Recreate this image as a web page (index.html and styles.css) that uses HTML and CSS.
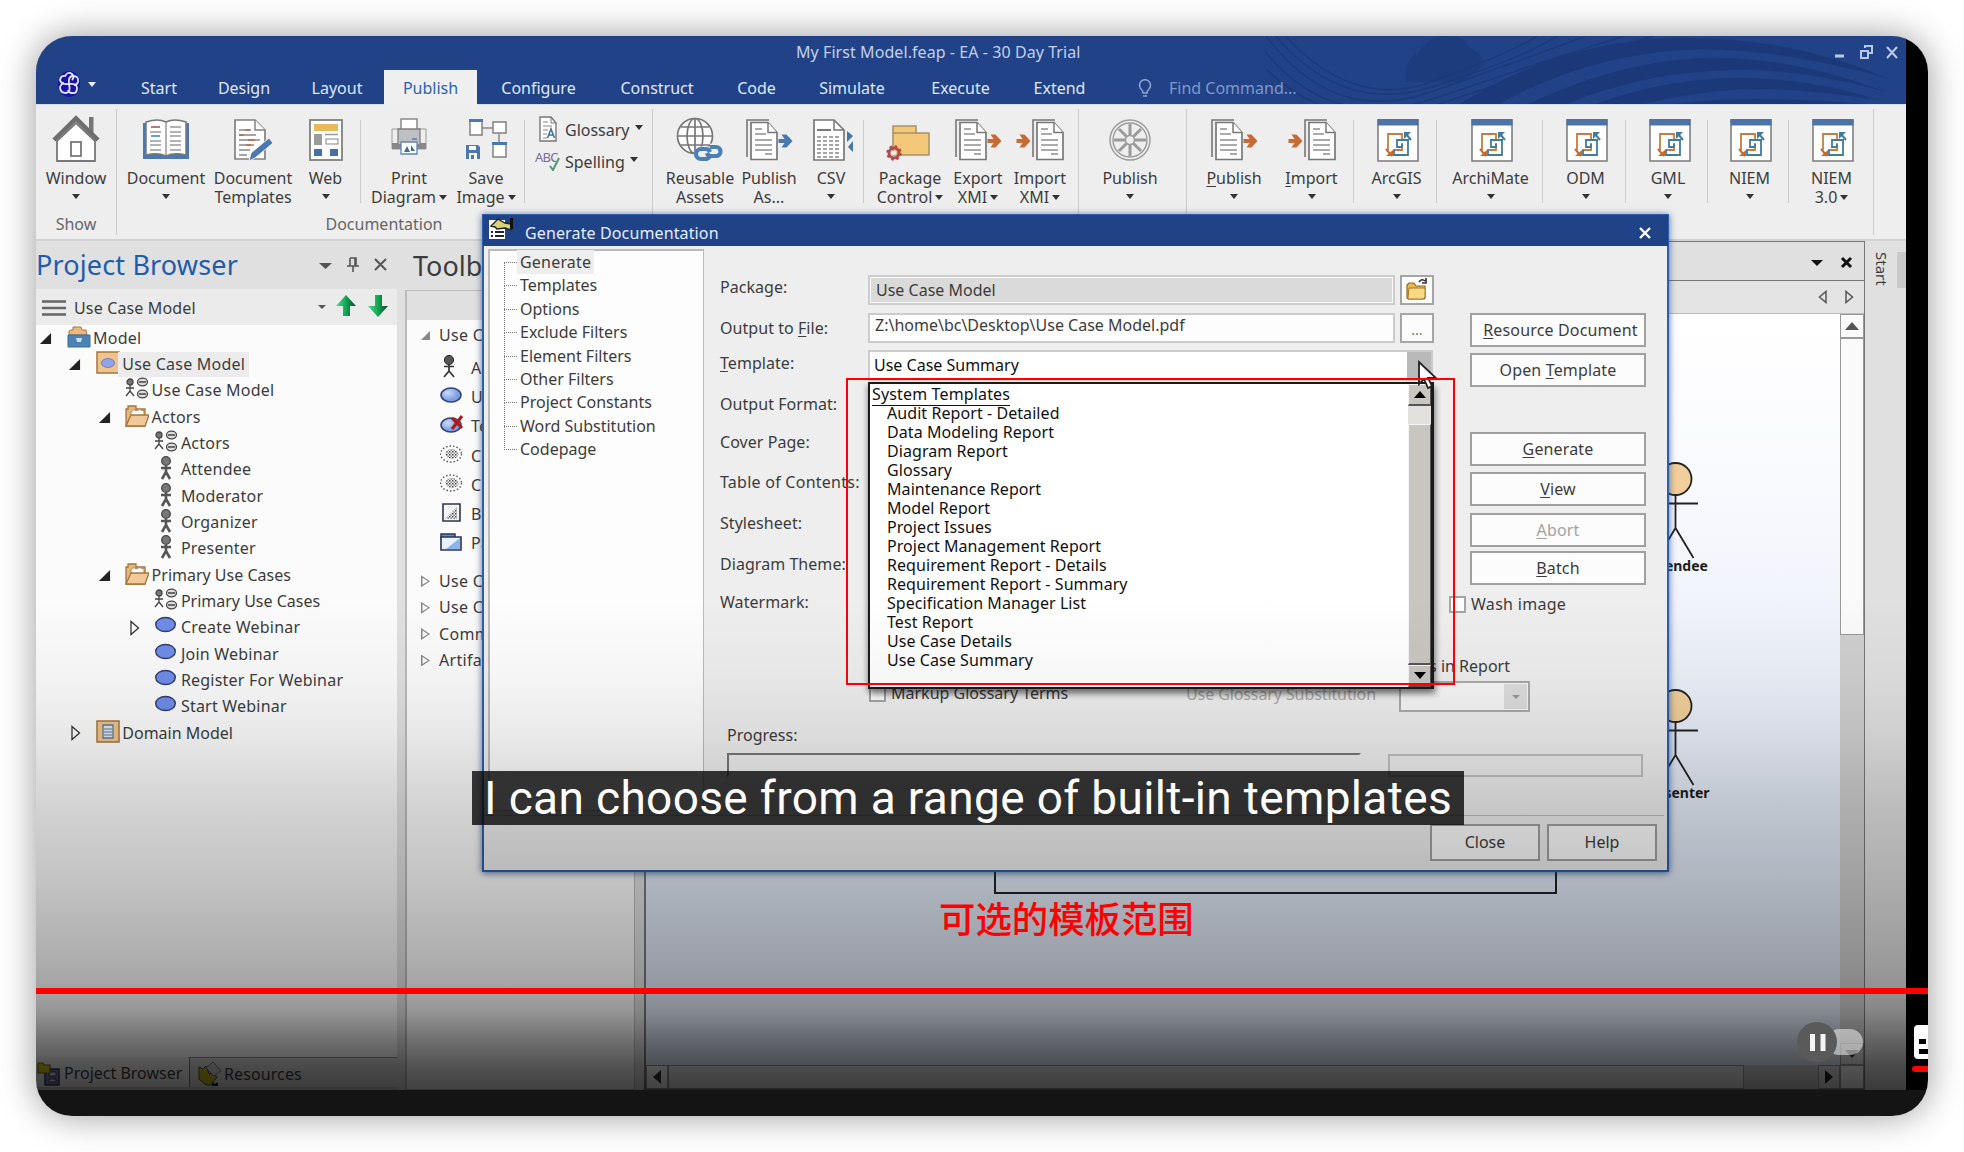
FILE: index.html
```html
<!DOCTYPE html>
<html lang="en">
<head>
<meta charset="utf-8">
<title>My First Model.feap - EA - 30 Day Trial</title>
<link rel="stylesheet" href="styles.css">
</head>
<body>
<svg class="defs" aria-hidden="true">
  <defs>
    <linearGradient id="gGreen" x1="0" x2="1"><stop offset="0" stop-color="#4be08a"/><stop offset=".5" stop-color="#12a554"/><stop offset="1" stop-color="#0b4a2c"/></linearGradient>
    <radialGradient id="gBall" cx=".35" cy=".35"><stop offset="0" stop-color="#c8dcfa"/><stop offset="1" stop-color="#7f9fe0"/></radialGradient>
    <pattern id="dots" width="3" height="3" patternUnits="userSpaceOnUse"><rect width="1.500" height="1.500" fill="#444"/><rect x="1.500" y="1.500" width="1.500" height="1.500" fill="#888"/></pattern>

    <symbol id="page" viewBox="0 0 32 42">
      <path d="M1 38V1h22" fill="none" stroke="#777" stroke-width="1.6"/>
      <path d="M5 3.500h17l9 10v27H5z" fill="#fff" stroke="#777" stroke-width="1.700"/>
      <path d="M22 3.500v10h9" fill="#fff" stroke="#777" stroke-width="1.500"/>
      <path d="M9 10h7M9 15h11M9 21h17M9 26h17M9 31h17M19 35h7" stroke="#8f8f8f" stroke-width="1.500"/>
    </symbol>
    <symbol id="arrow" viewBox="0 0 14 14"><path d="M0 5h6L3 .500h5L14 7l-6 6.500H3L6 9H0z"/></symbol>

    <symbol id="i-window" viewBox="0 0 48 48">
      <path d="M37 2h4.500v20L37 17z" fill="#777"/>
      <path d="M5 26 24 8l19 18v20H5z" fill="#fff" stroke="#777" stroke-width="1.800"/>
      <path d="M2 25 24 3.500 46 25" fill="none" stroke="#6e6e6e" stroke-width="4.500"/>
      <rect x="19" y="27" width="10" height="14" fill="#fff" stroke="#777" stroke-width="1.800"/>
    </symbol>
    <symbol id="i-book" viewBox="0 0 48 48">
      <path d="M1 8h46v36H1z" fill="#4a78b0"/>
      <path d="M4 7q12-4 20 0 8-4 20 0v33q-12-3-20 1-8-4-20-1z" fill="#fff" stroke="#777" stroke-width="1.500"/>
      <path d="M24 7v33" stroke="#999" stroke-width="1.500"/>
      <path d="M8 17h11M8 26h11M8 30h11M8 35h11M28 12h11M28 17h11M28 21h11M28 26h11M28 30h11M28 35h11" stroke="#999" stroke-width="1.300"/>
      <path d="M9 12h9" stroke="#a5503c" stroke-width="1.600"/><path d="M9 21h9" stroke="#3a82b0" stroke-width="1.600"/>
    </symbol>
    <symbol id="i-tmpl" viewBox="0 0 48 48">
      <path d="M6 5h20l10 10v29H6z" fill="#fff" stroke="#808080" stroke-width="1.700"/>
      <path d="M26 5v10h10" fill="#fff" stroke="#808080" stroke-width="1.500"/>
      <path d="M10 15h12M10 20h17M10 25h21M10 30h15M10 35h11M10 40h8" stroke="#888" stroke-width="1.400"/>
      <path d="M16 15h5M10 20h5M19 25h7M17 30h5" stroke="#b86a4c" stroke-width="1.500"/>
      <path d="m20 46 2-8 18-15 4 5-18 15z" fill="#4a78b0" stroke="#eee" stroke-width="1"/>
    </symbol>
    <symbol id="i-web" viewBox="0 0 48 48">
      <rect x="8" y="5" width="32" height="40" fill="#fff" stroke="#808080" stroke-width="1.800"/>
      <path d="M12 9h24v7H12z" fill="#e9b85d"/><path d="M12 19h8v11h-8z" fill="#9b9b9b"/>
      <path d="M23 19.500h13" stroke="#999" stroke-width="1.500"/><rect x="24" y="24" width="12" height="5" fill="#fff" stroke="#888"/>
      <path d="M12 34h8v7h-8zM28 34h8v7h-8z" fill="#4470a5"/>
    </symbol>
    <symbol id="i-print" viewBox="0 0 48 48">
      <path d="M7 14h34v20H7z" fill="#eee" stroke="#999" stroke-width="1"/>
      <path d="M7 28h34v6H7z" fill="#888"/>
      <path d="M16 4h16v12H16z" fill="#fff" stroke="#888" stroke-width="1.500"/>
      <path d="M13 14h22v16H13z" fill="#bfbfc2" stroke="#808080" stroke-width="1.300"/>
      <path d="M16 27h16v12H16z" fill="#fff" stroke="#5c87ac" stroke-width="1.300"/>
      <path d="m19 37 3-6 3 6zM26 30l4 6h-4z" fill="#3b7190"/><path d="M27 24h5" stroke="#5a7fb5" stroke-width="1.500"/>
    </symbol>
    <symbol id="i-save" viewBox="0 0 48 48">
      <path d="M20 13h11M37 19v9" stroke="#888" stroke-width="1.500"/>
      <path d="M8 5h12v15H8zM31 7h13v11H31zM31 28h13v14H31z" fill="#fff" stroke="#808080" stroke-width="1.500"/>
      <path d="M7 4h14v3H7zM30 27h15v3H30z" fill="#4a78b0"/>
      <path d="M4 30h12l2 2v12H4z" fill="#4a78b0"/><path d="M7 31h7v4H7zM7 38h8v6H7z" fill="#fff"/><path d="M9 40h3v4H9z" fill="#4a78b0"/>
    </symbol>
    <symbol id="i-globe" viewBox="0 0 48 48">
      <g fill="none" stroke="#777" stroke-width="1.700"><circle cx="19" cy="21" r="17.500" fill="#fff"/><ellipse cx="19" cy="21" rx="8" ry="17.500"/><path d="M19 3v35M2 21h35M5 12h28M5 30h28"/></g>
      <path d="M34 35h-9a5 5 0 0 0 0 9h6M30 41h10a5 5 0 0 0 0-9h-6" fill="none" stroke="#eee" stroke-width="7"/>
      <path d="M34 41q-2 3-5 3h-4a5 5 0 0 1 0-10h5q3 0 4 3M31 38q1 3 4 3h5a4 4 0 0 0 0-9h-6" fill="none" stroke="#4a80b5" stroke-width="4.200"/>
    </symbol>
    <symbol id="i-out" viewBox="0 0 48 48"><use href="#page" x="1" y="4" width="32" height="42"/><use href="#arrow" x="33" y="19" width="15" height="14"/></symbol>
    <symbol id="i-in" viewBox="0 0 48 48"><use href="#page" x="16" y="4" width="32" height="42"/><use href="#arrow" x="0" y="19" width="15" height="14"/></symbol>
    <symbol id="i-csv" viewBox="0 0 48 48">
      <path d="M7 5h20l10 10v30H7z" fill="#fff" stroke="#777" stroke-width="1.700"/><path d="M27 5v10h10" fill="none" stroke="#777" stroke-width="1.500"/>
      <path d="M10 15h14" stroke="#777" stroke-width="2"/><path d="M10 22h24M10 26h24M10 30h24M10 34h24M10 38h24M10 42h24" stroke="#888" stroke-width="1.300" stroke-dasharray="4 2"/>
      <path d="m40 16 6 5-6 6zM46 26v11l-5-5z" fill="#4477a6"/>
    </symbol>
    <symbol id="i-pack" viewBox="0 0 48 48">
      <path d="M7 19V11h23v7h13v22H7z" fill="#f3c878" stroke="#a5936c" stroke-width="1.600"/><path d="M7 18h24" stroke="#a5936c" stroke-width="1.300"/>
      <circle cx="8" cy="38" r="5" fill="none" stroke="#b24a4a" stroke-width="3"/><circle cx="8" cy="38" r="6.500" fill="none" stroke="#b24a4a" stroke-width="2.500" stroke-dasharray="2.500 2.600"/><circle cx="8" cy="38" r="2.200" fill="#eee"/>
    </symbol>
    <symbol id="i-wheel" viewBox="0 0 48 48">
      <g fill="none" stroke="#9a9a9a" stroke-width="1.400"><circle cx="24" cy="25" r="20"/><circle cx="24" cy="25" r="17"/><circle cx="24" cy="25" r="4.500"/></g>
      <g stroke="#9a9a9a" stroke-width="3"><path d="M24 9v11M24 30v11M8 25h11M29 25h11M13 14l8 8M27 28l8 8M35 14l-8 8M21 28l-8 8"/></g>
    </symbol>
    <symbol id="i-schema" viewBox="0 0 48 48">
      <rect x="4" y="5" width="40" height="41" fill="#fff" stroke="#808080" stroke-width="1.600"/><path d="M3.500 4h41v6.500h-41z" fill="#4d74a5"/>
      <path d="M14 35V19h14v5M28 28v7h-9" fill="none" stroke="#c97c38" stroke-width="1.800"/>
      <path d="M34 24v16H20v-5M35 25H23v7h5v-3" fill="none" stroke="#417b9e" stroke-width="1.800"/>
      <path d="M30 17h7v7z" fill="#417b9e" transform="matrix(-1 0 0 1 67 0)"/><path d="m37 25-5-6" stroke="#417b9e" stroke-width="2"/><path d="m12 34 6 7" stroke="#c46a2c" stroke-width="2"/><path d="M19 35v6h-7z" fill="#c46a2c"/>
    </symbol>
    <symbol id="i-gloss" viewBox="0 0 20 26"><path d="M2 1h11l5 6v18H2z" fill="#fff" stroke="#777" stroke-width="1.400"/><path d="M13 1v6h5" fill="none" stroke="#777"/><path d="M5 6h5M5 10h9M5 14h5M5 18h4M5 22h4" stroke="#888" stroke-width="1.200"/><path d="m9.500 22 3.500-9 3.500 9M11 19h4" stroke="#43739c" stroke-width="1.600" fill="none"/></symbol>

    <symbol id="t-open" viewBox="0 0 14 14"><path d="M13 1v12H1z" fill="#222"/></symbol>
    <symbol id="t-shut" viewBox="0 0 14 16"><path d="M4 1.500v13L11.500 8z" fill="#fff" stroke="#333" stroke-width="1.300"/></symbol>
    <symbol id="n-model" viewBox="0 0 24 24"><path d="M2 10V6q1-1 3-1h1V2h8l1 3h4l1 5z" fill="#eab981" stroke="#a5763b"/><path d="M1 10h22v12H1z" fill="#4c83b5" stroke="#3d6c98"/><path d="M9 13h6l-1 4h-4z" fill="#cfe2f3"/></symbol>
    <symbol id="n-ucm" viewBox="0 0 24 24"><path d="M1 1h22v21H1z" fill="#eec38c" stroke="#a5763b" stroke-width="1.500"/><ellipse cx="12" cy="12" rx="6.500" ry="4.500" fill="#92a1ea" stroke="#7a7fae"/></symbol>
    <symbol id="n-dom" viewBox="0 0 24 24"><path d="M1 1h22v21H1z" fill="#eec38c" stroke="#a5763b" stroke-width="1.500"/><path d="M7 5h10v13H7z" fill="#d9e6f5" stroke="#65758a" stroke-width="1.300"/><path d="M8 9h8M8 12h8M8 15h8" stroke="#65758a"/></symbol>
    <symbol id="n-diag" viewBox="0 0 24 24"><g fill="none" stroke="#444" stroke-width="1.300"><circle cx="5" cy="5" r="3" fill="#777"/><path d="M5 8v6M1 11h8M5 14l-4 5M5 14l4 5"/><ellipse cx="17.500" cy="5" rx="5" ry="3.800" fill="#ddd"/><ellipse cx="17.500" cy="17" rx="5" ry="3.800" fill="#ddd"/><path d="M14 5h7M14 17h7"/></g></symbol>
    <symbol id="n-folder" viewBox="0 0 24 24"><path d="M1 22V5h2V2h8v3h9v17z" fill="#e6b77d" stroke="#a5763b" stroke-width="1.300"/><path d="M6 8q3-4 5-1 3-3 8 0v8H6z" fill="#fff" stroke="#a5876b"/><path d="m1 22 5-11h18l-4 11z" fill="#f1c999" stroke="#a5763b" stroke-width="1.300"/></symbol>
    <symbol id="n-actor" viewBox="0 0 24 24"><circle cx="12" cy="5" r="4.300" fill="#777" stroke="#444" stroke-width="1.300"/><path d="M12 10v7M7 12h10M12 16l-4 7M12 16l4 7" fill="none" stroke="#555" stroke-width="2.600"/></symbol>
    <symbol id="n-case" viewBox="0 0 24 24"><ellipse cx="11.500" cy="10.500" rx="9.800" ry="7" fill="#6f8ce8" stroke="#333c68" stroke-width="1.400"/></symbol>

    <symbol id="b-actor" viewBox="0 0 24 24"><circle cx="9" cy="6" r="4.600" fill="#555" stroke="#222"/><path d="M9 10v7M4 12.500h10M9 17l-5 6M9 17l5 6" fill="none" stroke="#333" stroke-width="1.700"/></symbol>
    <symbol id="b-case" viewBox="0 0 24 24"><ellipse cx="11" cy="12" rx="10" ry="7" fill="url(#gBall)" stroke="#33427a" stroke-width="1.600"/></symbol>
    <symbol id="b-test" viewBox="0 0 24 24"><ellipse cx="11" cy="12" rx="10" ry="7" fill="url(#gBall)" stroke="#33427a" stroke-width="1.600"/><path d="m12 5 10 10M22 3 12 16" stroke="#b01818" stroke-width="3"/></symbol>
    <symbol id="b-coll" viewBox="0 0 24 24"><ellipse cx="11" cy="12" rx="10.500" ry="8" fill="none" stroke="#555" stroke-width="1.400" stroke-dasharray="1.500 2"/><ellipse cx="12" cy="12" rx="6.500" ry="5" fill="url(#dots)"/></symbol>
    <symbol id="b-bound" viewBox="0 0 24 24"><path d="M3 3h17v17H3z" fill="#f5f5f5" stroke="#2d3550" stroke-width="1.600"/><path d="M17 6v12H5z" fill="url(#dots)"/></symbol>
    <symbol id="b-pack" viewBox="0 0 24 24"><path d="M1 4h14v4H1z" fill="#7289bd" stroke="#26345c" stroke-width="1.500"/><path d="M1 7h20v13H1z" fill="#e9f1fc" stroke="#26345c" stroke-width="1.600"/><path d="M20 8v11H6z" fill="#8db4e8"/></symbol>
  </defs>
</svg>

<main class="frame">
  <div class="app">
    <header class="titlebar">
      <svg class="waves" viewBox="0 0 660 68" preserveAspectRatio="none">
        <path d="M144 46q0-26 12-28Q170-2 186 0q20 0 24 12 12 4 16 16l-24 18z" fill="#1b3a7b" opacity=".7"/>
        <g fill="none" stroke="#1b3a7a" stroke-width="1.500"><path d="M0 0Q70 90 170 56T330 0M10 0Q80 80 175 50T300 0M20 0Q90 74 170 46T280 0M-10 4Q60 100 175 62T370 0M-20 10Q55 108 185 66T400 0"/></g>
        <g fill="#1b3979"><path d="M200 68Q300 6 420 2q120-2 220 40Q520 10 430 14 330 20 240 68z"/><path d="M270 68Q380 18 480 22q80 4 160 34-90-24-160-22-90 2-170 34z"/><path d="M340 68q80-28 160-26 70 2 130 22-90-14-150-10-50 4-90 14z"/><path d="M420 68q80-10 200 0z"/></g>
      </svg>
      <div class="title-row"><span>My First Model.feap - EA - 30 Day Trial</span>
        <svg class="winbtns" width="70" height="20" viewBox="0 0 70 20"><g fill="none" stroke="#b9c8e8" stroke-width="2"><path d="M2 13h9" stroke-width="3"/><path d="M32 5V3h7v7h-3M28 8h7v7h-7z"/><path d="m54 4 10 11M64 4 54 15"/></g></svg>
      </div>
      <nav class="tabs">
        <span class="logo"><svg width="24" height="28" viewBox="0 0 24 28"><ellipse cx="12" cy="14" rx="11" ry="13" fill="#1712a8"/><g fill="none" stroke="#e7e6ff" stroke-width="1.800"><path d="M12 14Q4 15 3 10q1-5 5-4 3-5 7-2 3 3 0 6M12 14q-1-8 4-8 6 0 5 6-1 3-4 3M12 14q8-1 8 4 0 6-5 5-3 0-4-3M12 14q2 8-3 9-6 0-6-6 1-3 4-4"/></g></svg><i class="caret light"></i></span>
        <span>Start</span><span>Design</span><span>Layout</span><span class="active">Publish</span><span>Configure</span><span>Construct</span><span>Code</span><span>Simulate</span><span>Execute</span><span>Extend</span>
        <span class="find"><svg width="14" height="20" viewBox="0 0 14 20"><path d="M5 14Q5 12 3 10a5.500 5.500 0 1 1 8 0Q9 12 9 14zM5 17h4" fill="none" stroke="#8ea6d6" stroke-width="1.500"/></svg>Find Command...</span>
      </nav>
    </header>

    <section class="ribbon">
      <div class="item"><svg><use href="#i-window"/></svg>Window<i class="caret"></i></div>
      <i class="sep full start"></i>
      <div class="item"><svg><use href="#i-book"/></svg>Document<i class="caret"></i></div>
      <div class="item"><svg><use href="#i-tmpl"/></svg><span>Document</span><span>Templates</span></div>
      <div class="item"><svg><use href="#i-web"/></svg>Web<i class="caret"></i></div>
      <i class="sep"></i>
      <div class="item"><svg><use href="#i-print"/></svg><span>Print</span><span>Diagram<i class="caret in"></i></span></div>
      <div class="item"><svg><use href="#i-save"/></svg><span>Save</span><span>Image<i class="caret in"></i></span></div>
      <i class="sep start"></i>
      <div class="small">
        <div><svg width="20" height="26"><use href="#i-gloss"/></svg><span>Glossary</span><i class="caret"></i></div>
        <div><span class="abc">ABC<svg width="12" height="14" viewBox="0 0 12 14"><path d="m1 9 3 4 6-12" fill="none" stroke="#4d9a72" stroke-width="2"/></svg></span><span>Spelling</span><i class="caret"></i></div>
      </div>
      <i class="sep full start"></i>
      <div class="item"><svg><use href="#i-globe"/></svg><span>Reusable</span><span>Assets</span></div>
      <div class="item blue"><svg><use href="#i-out"/></svg><span>Publish</span><span>As...</span></div>
      <div class="item"><svg><use href="#i-csv"/></svg>CSV<i class="caret"></i></div>
      <i class="sep start"></i>
      <div class="item"><svg><use href="#i-pack"/></svg><span>Package</span><span>Control<i class="caret in"></i></span></div>
      <div class="item orange"><svg><use href="#i-out"/></svg><span>Export</span><span>XMI<i class="caret in"></i></span></div>
      <div class="item orange"><svg><use href="#i-in"/></svg><span>Import</span><span>XMI<i class="caret in"></i></span></div>
      <i class="sep full"></i>
      <div class="item"><svg><use href="#i-wheel"/></svg>Publish<i class="caret"></i></div>
      <i class="sep full"></i>
      <div class="item orange"><svg><use href="#i-out"/></svg><span><u>P</u>ublish</span><i class="caret"></i></div>
      <div class="item orange"><svg><use href="#i-in"/></svg><span><u>I</u>mport</span><i class="caret"></i></div>
      <i class="sep"></i>
      <div class="item sch"><svg><use href="#i-schema"/></svg>ArcGIS<i class="caret"></i></div>
      <i class="sep"></i>
      <div class="item sch"><svg><use href="#i-schema"/></svg>ArchiMate<i class="caret"></i></div>
      <i class="sep"></i>
      <div class="item sch"><svg><use href="#i-schema"/></svg>ODM<i class="caret"></i></div>
      <i class="sep"></i>
      <div class="item sch"><svg><use href="#i-schema"/></svg>GML<i class="caret"></i></div>
      <i class="sep"></i>
      <div class="item sch"><svg><use href="#i-schema"/></svg>NIEM<i class="caret"></i></div>
      <i class="sep"></i>
      <div class="item sch"><svg><use href="#i-schema"/></svg><span>NIEM</span><span>3.0<i class="caret in"></i></span></div>
      <i class="sep full"></i>
      <div class="group g1">Show</div>
      <div class="group g2">Documentation</div>
    </section>

    <div class="work">
      <aside class="browser">
        <div class="panel-head"><h2>Project Browser</h2>
          <svg width="74" height="20" viewBox="0 0 74 20"><path d="M1 8h13l-6.500 6z" fill="#555"/><g fill="none" stroke="#555" stroke-width="1.600"><path d="M32 3h6v8M32 3v8M29 11h12M35 11v6M37 3v8"/><path d="m57 4 11 11M68 4 57 15" stroke-width="2"/></g></svg>
        </div>
        <div class="crumb"><svg width="24" height="16" viewBox="0 0 24 16"><path d="M0 1.500h24M0 8h24M0 14.500h24" stroke="#666" stroke-width="2.600"/></svg><span>Use Case Model</span>
          <svg class="updown" width="70" height="24" viewBox="0 0 70 24"><path d="M0 11h8l-4 4z" fill="#555"/><path d="M28 1 38 12h-6v10h-7V12h-7z" fill="url(#gGreen)"/><path d="M60 23 70 12h-6V1h-7v11h-7z" fill="url(#gGreen)"/></svg>
        </div>
        <ul class="tree">
          <li class="l0"><svg class="tw"><use href="#t-open"/></svg><svg class="ic"><use href="#n-model"/></svg><b>Model</b></li>
          <li class="l1"><svg class="tw"><use href="#t-open"/></svg><svg class="ic"><use href="#n-ucm"/></svg><b class="sel">Use Case Model</b></li>
          <li class="l2"><svg class="tw"></svg><svg class="ic"><use href="#n-diag"/></svg><b>Use Case Model</b></li>
          <li class="l2"><svg class="tw"><use href="#t-open"/></svg><svg class="ic"><use href="#n-folder"/></svg><b>Actors</b></li>
          <li class="l3"><svg class="tw"></svg><svg class="ic"><use href="#n-diag"/></svg><b>Actors</b></li>
          <li class="l3"><svg class="tw"></svg><svg class="ic"><use href="#n-actor"/></svg><b>Attendee</b></li>
          <li class="l3"><svg class="tw"></svg><svg class="ic"><use href="#n-actor"/></svg><b>Moderator</b></li>
          <li class="l3"><svg class="tw"></svg><svg class="ic"><use href="#n-actor"/></svg><b>Organizer</b></li>
          <li class="l3"><svg class="tw"></svg><svg class="ic"><use href="#n-actor"/></svg><b>Presenter</b></li>
          <li class="l2 tight"><svg class="tw"><use href="#t-open"/></svg><svg class="ic"><use href="#n-folder"/></svg><b>Primary Use Cases</b></li>
          <li class="l3 tight"><svg class="tw"></svg><svg class="ic"><use href="#n-diag"/></svg><b>Primary Use Cases</b></li>
          <li class="l3"><svg class="tw shut"><use href="#t-shut"/></svg><svg class="ic"><use href="#n-case"/></svg><b>Create Webinar</b></li>
          <li class="l3"><svg class="tw"></svg><svg class="ic"><use href="#n-case"/></svg><b>Join Webinar</b></li>
          <li class="l3"><svg class="tw"></svg><svg class="ic"><use href="#n-case"/></svg><b>Register For Webinar</b></li>
          <li class="l3"><svg class="tw"></svg><svg class="ic"><use href="#n-case"/></svg><b>Start Webinar</b></li>
          <li class="l1 tight"><svg class="tw shut"><use href="#t-shut"/></svg><svg class="ic"><use href="#n-dom"/></svg><b>Domain Model</b></li>
        </ul>
        <div class="dock-tabs">
          <span class="on"><svg width="24" height="26" viewBox="0 0 24 26"><path d="M8 9h14v16H8z" fill="#7d7fae" stroke="#33355e" stroke-width="1.500"/><path d="M12 12h7v4h-7zM12 19h7v3h-7z" fill="#dde" stroke="#33355e"/><path d="M1 3h5l1 2h6v8H1z" fill="#d8c62a" stroke="#6d6410" stroke-width="1.200"/></svg>Project Browser</span>
          <span><svg width="24" height="26" viewBox="0 0 24 26"><path d="m2 6 4 2 3-3 3 8 3-1 5 4-6 8-5 0-7-6z" fill="#c8b823" stroke="#55500f"/><path d="m9 7 7-6 8 9-7 5z" fill="#d6d6dc" stroke="#777"/><path d="M15 25v-4l3 2 3-2v4z" fill="#111"/></svg>Resources</span>
        </div>
      </aside>

      <aside class="toolbox">
        <h2>Toolbox</h2>
        <div class="toolpane">
          <div class="band"></div>
          <p class="cat first"><i class="tri o"></i>Use Case</p>
          <p><svg><use href="#b-actor"/></svg>Actor</p>
          <p><svg><use href="#b-case"/></svg>Use Case</p>
          <p><svg><use href="#b-test"/></svg>Test Case</p>
          <p><svg><use href="#b-coll"/></svg>Collaboration</p>
          <p><svg><use href="#b-coll"/></svg>Collaboration Use</p>
          <p><svg><use href="#b-bound"/></svg>Boundary</p>
          <p><svg><use href="#b-pack"/></svg>Package</p>
          <div class="more">
            <p class="cat"><i class="tri"></i>Use Case Relations</p>
            <p class="cat"><i class="tri"></i>Use Case Patterns</p>
            <p class="cat"><i class="tri"></i>Common</p>
            <p class="cat"><i class="tri"></i>Artifacts</p>
          </div>
        </div>
      </aside>

      <section class="diagram">
        <div class="dtabs"><svg width="46" height="16" viewBox="0 0 46 16"><path d="M1 5h12l-6 6z" fill="#111"/><path d="m32 3 9 9M41 3l-9 9" stroke="#111" stroke-width="3"/></svg></div>
        <div class="dnav"><svg width="36" height="14" viewBox="0 0 36 14"><path d="M8 1.500v11L1.500 7zM28 1.500v11L34.500 7z" fill="none" stroke="#555" stroke-width="1.500"/></svg></div>
        <div class="dmain">
          <div class="canvas">
            <svg width="1195" height="750" viewBox="646 314 1195 750">
              <path d="M995 300V893H1556V300" fill="none" stroke="#222" stroke-width="2"/>
              <g id="fig" fill="none" stroke="#222" stroke-width="1.800"><circle cx="1675.500" cy="479" r="16" fill="#f2cf9a"/><path d="M1675.500 495v33M1653 503.500h45M1675.500 528l-18 30M1675.500 528l18 30"/></g>
              <use href="#fig" y="227"/>
              <text x="1675.500" y="571">Attendee</text><text x="1675.500" y="798">Presenter</text>
            </svg>
          </div>
          <div class="vscroll"><span class="btn"><svg width="14" height="8" viewBox="0 0 14 8"><path d="M0 8h14L7 0z" fill="#555"/></svg></span><span class="thumb"></span><span class="btn end"><svg width="14" height="8" viewBox="0 0 14 8"><path d="M0 0h14L7 8z" fill="#333"/></svg></span></div>
        </div>
        <div class="hscroll"><span class="btn"><svg width="8" height="14" viewBox="0 0 8 14"><path d="M8 0v14L0 7z" fill="#333"/></svg></span><span class="thumb"></span><span class="btn end"><svg width="8" height="14" viewBox="0 0 8 14"><path d="M0 0v14l8-7z" fill="#222"/></svg></span><span class="corner"></span></div>
      </section>
      <aside class="side"><span>Start</span><i></i></aside>
    </div>
  </div>

  <section class="dialog">
    <header><svg width="26" height="24" viewBox="0 0 26 24"><path d="M1 3h16v19H1z" fill="#fff"/><path d="M3 15h2M3 19h2M7 15h9M7 19h9" stroke="#223" stroke-width="2"/><path d="m3 9 7-7 7 4 6 1v6l-6-2-8 1-2-2z" fill="#d9d27a" stroke="#222" stroke-width="1.400"/><path d="M22 1h3v11h-3z" fill="#111"/></svg><span>Generate Documentation</span><svg class="x" width="14" height="14" viewBox="0 0 14 14"><path d="m2 2 10 10M12 2 2 12" stroke="#fff" stroke-width="2.400"/></svg></header>
    <div class="body">
      <ul class="dtree"><li><b>Generate</b></li><li>Templates</li><li>Options</li><li>Exclude Filters</li><li>Element Filters</li><li>Other Filters</li><li>Project Constants</li><li>Word Substitution</li><li>Codepage</li></ul>
      <div class="main">
        <div class="top">
          <div class="form">
            <label>Package:</label><div class="field f1"><span class="ro">Use Case Model</span><span class="sq"><svg width="26" height="26" viewBox="0 0 26 26"><path d="M3 21V8l2-2h5l2 3h9v12q0 1-1 1H4z" fill="#e9b94d" stroke="#8d6a20" stroke-width="1.200"/><path d="M4 21 5 11h16v9q-1 2-3 2H4z" fill="#f8d982" stroke="#a17b2c"/><path d="M15 5q3-4 6-1M22 1v5h-4" fill="none" stroke="#333" stroke-width="1.600"/></svg></span></div>
            <label>Output to&nbsp;<u>F</u>ile:</label><div class="field"><span class="path">Z:\home\bc\Desktop\Use Case Model.pdf</span><span class="sq">...</span></div>
            <label><u>T</u>emplate:</label><div class="field f3"><span class="combo">Use Case Summary<i></i></span></div>
            <label>Output Format:</label><label>Cover Page:</label><label class="wide">Table of Contents:</label><label>Stylesheet:</label><label>Diagram Theme:</label><label>Watermark:</label>
          </div>
          <div class="actions">
            <button><span><u>R</u>esource Document</span></button><button><span>Open <u>T</u>emplate</span></button><button class="gap"><span><u>G</u>enerate</span></button><button><span><u>V</u>iew</span></button><button class="off"><span><u>A</u>bort</span></button><button class="last"><span><u>B</u>atch</span></button>
            <span class="check wash"><i></i>Wash image</span>
          </div>
        </div>
        <div class="rep">Diagrams in Report</div>
        <div class="gloss"><span class="check"><i></i>Markup Glossary Terms</span><span class="dim">Use Glossary Substitution</span><span class="combo2"><i></i></span></div>
        <div class="plabel">Progress:</div>
        <div class="bars"><span></span><span></span></div>
      </div>
    </div>
    <footer><button>Close</button><button>Help</button></footer>

    <div class="droplist">
      <ul><li class="h"><span>System Templates</span></li><li>Audit Report - Detailed</li><li>Data Modeling Report</li><li>Diagram Report</li><li>Glossary</li><li>Maintenance Report</li><li>Model Report</li><li>Project Issues</li><li>Project Management Report</li><li>Requirement Report - Details</li><li>Requirement Report - Summary</li><li>Specification Manager List</li><li>Test Report</li><li>Use Case Details</li><li>Use Case Summary</li></ul>
      <div class="bar"><span><svg width="12" height="7" viewBox="0 0 12 7"><path d="M0 7h12L6 0z"/></svg></span><span class="t"></span><span><svg width="12" height="7" viewBox="0 0 12 7"><path d="M0 0h12L6 7z"/></svg></span></div>
    </div>
    <svg class="cursor" width="22" height="32" viewBox="0 0 22 32"><path d="M2 2v22l5-5 4 9 4-2-4-8h8z" fill="#fff" stroke="#222" stroke-width="1.800"/></svg>
  </section>

  <div class="shade"></div>
  <div class="callout"></div>
  <div class="toggle"><svg width="70" height="44" viewBox="0 0 70 44"><rect x="30" y="10" width="37" height="26" rx="13" fill="#fff" fill-opacity=".5"/><circle cx="21" cy="23" r="20" fill="#5a5a5a"/><path d="M14 15h5v17h-5zM24.500 15h5v17h-5z" fill="#f5f5f5"/></svg></div>
  <div class="cc"><svg width="24" height="50" viewBox="0 0 24 50"><rect x="3" y="1" width="40" height="34" rx="4" fill="#fff"/><path d="M8 15h7v5H8zM8 25h16v5H8zM18 15h8v5h-8z" fill="#000"/><rect x="1" y="42" width="40" height="6" rx="3" fill="#f00"/></svg></div>
  <p class="caption">I can choose from a range of built-in templates</p>
  <p class="note" lang="zh-CN">可选的模板范围</p>
  <div class="progress"></div>
</main>
</body>
</html>
```

FILE: styles.css
```css
* { box-sizing: border-box; }
body { margin: 0; padding: 36px; background: #fff; font: 16px/19px "Noto Sans", "Open Sans", sans-serif; color: #3c3c3c; }
p, ul, h2 { margin: 0; padding: 0; list-style: none; font-weight: 400; }
b { font-weight: 400; }
i { display: block; }
.defs { position: absolute; width: 0; height: 0; }
.frame { position: relative; width: 1892px; height: 1080px; border-radius: 36px; overflow: hidden; background: linear-gradient(to top, #141414 26px, #000 26px); }
body::before { content: ""; position: absolute; left: 36px; top: 36px; width: 1892px; height: 1080px; border-radius: 36px; box-shadow: 0 0 36px rgba(0,0,0,.4); }
.app { width: 1870px; height: 1054px; display: flex; flex-direction: column; background: #e0e0e0; }

/* title bar */
.titlebar { position: relative; height: 68px; background: #214287; color: #c3d0ec; }
.waves { position: absolute; right: 0; top: 0; width: 640px; height: 68px; }
.title-row, .tabs { position: relative; }
.title-row { height: 34px; padding-top: 7px; display: flex; justify-content: flex-end; }
.title-row span { width: 285px; margin-right: 752px; white-space: nowrap; letter-spacing: .07px; }
.winbtns { margin: 0 3px 0 0; }
.tabs { display: grid; grid-template-columns: 84px 78px 92px 94px 93px 123px 114px 85px 106px 111px 87px 1fr; height: 35px; line-height: 37px; color: #dfe8fa; text-align: center; }
.tabs > * { white-space: nowrap; }
.tabs .active { background: #efefef; color: #2b62ae; height: 35px; }
.logo { display: flex; align-items: center; gap: 7px; padding: 0 0 9px 21px; }
.find { display: flex; align-items: center; gap: 17px; padding-left: 35px; color: #8098c9; }
.caret { width: 0; height: 0; border: 4px solid transparent; border-top: 5px solid #333; border-bottom: 0; }
.caret.light { border-top-color: #e8eefb; }
.caret.in { display: inline-block; margin-left: 3px; vertical-align: 3px; }

/* ribbon */
.ribbon { height: 137px; border-top: 1px solid #d4e0f8; border-bottom: 2px solid #d2d2d2; background: #eee; display: grid; grid-template-rows: 105px 29px;
  grid-template-columns: 80px 10px 80px 94px 51px 19px 78px 76px 7px 121px 9px 78px 60px 64px 9px 76px 60px 64px 12px 92px 20px 76px 79px 5px 78px 4px 102px 4px 80px 3px 79px 3px 78px 3px 80px 6px; }
.item { display: flex; flex-direction: column; align-items: center; padding-top: 10px; white-space: nowrap; line-height: 19px; }
.item > svg { width: 48px; height: 48px; margin-bottom: 6px; flex: none; }
.item > .caret { margin-top: 6px; }
.item.blue { fill: #4a78ad; }
.item.orange { fill: #c66b35; }
.item.sch { padding-left: 3px; }
.item.sch > svg { margin-right: -3px; }
.sep { width: 1px; height: 83px; margin: 15px auto 0; background: #ccc; }
.sep.full { grid-row: 1 / 3; height: 126px; margin-top: 4px; }
.ribbon .sep.start { margin-left: 0; }
.ribbon > * { grid-row: 1; }
.ribbon > .group { grid-row: 2; text-align: center; color: #666; padding-top: 5px; }
.g1 { grid-column: 1; }
.g2 { grid-column: 3 / 11; margin-left: -10px; }
.small { padding: 9px 0 0 4px; }
.small div { display: flex; align-items: center; height: 32px; }
.small div > svg { width: 20px; height: 26px; margin: -2px 7px 0 3px; }
.small .caret { margin: -6px 0 0 5px; }
.abc { position: relative; width: 30px; font-size: 13px; letter-spacing: -.8px; color: #7b6d96; margin-top: -9px; }
.abc svg { position: absolute; left: 14px; top: 9px; }

/* workspace */
.work { flex: 1; display: flex; min-height: 0; }
.browser { width: 361px; display: flex; flex-direction: column; background: #fbfbfb; }
h2 { font-size: 27px; line-height: 50px; }
.panel-head { height: 48px; background: #e0e0e0; display: flex; justify-content: space-between; align-items: center; padding-right: 5px; }
.panel-head h2 { color: #1f5cab; letter-spacing: .15px; }
.panel-head h2, .toolbox h2 { white-space: nowrap; }
.crumb { height: 36px; background: #ebebeb; display: flex; align-items: center; padding: 2px 0 0 6px; gap: 8px; letter-spacing: .15px; }
.updown { margin: -4px 9px 0 auto; }
.tree { flex: 1; letter-spacing: .22px; }
.tree li { display: flex; align-items: center; height: 26.35px; padding-left: 3px; white-space: nowrap; }
.tree .l1 { padding-left: 32.3px; }
.tree .l2 { padding-left: 61.6px; }
.tree .l3 { padding-left: 90.9px; }
.tree .tight { letter-spacing: 0; }
.tw { width: 13px; height: 13px; flex: none; margin-right: 14.5px; }
.tw.shut { width: 14px; height: 16px; margin-right: 13.5px; }
.ic { width: 24px; height: 24px; flex: none; margin: -3px 2.5px 0 0; }
.tree .sel { background: #ececec; padding: 3px 4px; margin-left: -4px; }
.dock-tabs { height: 33px; display: flex; line-height: 30px; border-bottom: 3px solid #ccc; }
.dock-tabs span { display: flex; align-items: center; gap: 3px; flex: 1; background: #e0e0e0; border-top: 1px solid #999; padding: 2px 0 0 7px; white-space: nowrap; letter-spacing: .1px; }
.dock-tabs .on { flex: 0 0 154px; background: #f3f3f3; border-top: 0; border-right: 1px solid #777; padding-left: 1px; letter-spacing: 0; }
.toolbox { width: 238px; margin-left: 8px; overflow: hidden; display: flex; flex-direction: column; }
.toolbox h2 { padding-left: 8px; height: 49px; flex: none; }
.toolpane { flex: 1; width: 230px; border: 1px solid #bbb; border-width: 1px 1px 1px 2px; background: #fbfbfb; letter-spacing: .3px; }
.band { height: 29px; background: #e0e0e0; }
.toolpane p { width: 76px; overflow: hidden; height: 29.3px; display: flex; align-items: center; white-space: nowrap; padding: 3px 0 0 33px; }
.toolpane p svg { width: 24px; height: 24px; margin: -4px 7px 0 0; flex: none; }
.toolpane p.cat { height: 29px; padding: 0 0 0 14px; }
.toolpane p.first { padding-top: 2px; margin-bottom: 3px; }
.more { padding-top: 11px; }
.toolpane .more .cat { height: 26.4px; }
.tri { flex: none; width: 9px; height: 12px; margin-right: 9px; background: #888; clip-path: polygon(0 0, 100% 50%, 0 100%, 0 0, 1.5px 2.5px, 1.5px 9.5px, 7px 6px, 1.5px 2.500px); }
.tri.o { height: 9px; clip-path: polygon(100% 0, 100% 100%, 0 100%); }
.diagram { width: 1221px; margin-left: 1px; border: 1px solid #777; border-left: 2px solid #777; display: flex; flex-direction: column; }
.dtabs { height: 39px; border-bottom: 1px solid #777; display: flex; justify-content: flex-end; align-items: center; padding: 4px 8px 0 0; }
.dnav { height: 33px; background: #e4e4e4; border-bottom: 1px solid #bbb; display: flex; justify-content: flex-end; align-items: center; padding-right: 10px; }
.dmain { flex: 1; display: flex; min-height: 0; }
.canvas { flex: 1; min-width: 0; overflow: hidden; background: linear-gradient(#fff, #f8f9fd 25%, #edf1fa 45%, #e2eaf6 70%, #dfe7f6); }
.canvas text { font: bold 14px "Noto Sans", sans-serif; text-anchor: middle; fill: #1c1c1c; }
.vscroll { width: 24px; background: #cfcfcf; display: flex; flex-direction: column; }
.vscroll > *, .hscroll > * { border: 1px solid #999; background: #fafafa; display: flex; align-items: center; justify-content: center; }
.vscroll .btn { height: 24px; }
.vscroll .thumb { height: 297px; }
.vscroll .end, .hscroll .end { background: #e0e0e0; }
.vscroll .end { margin-top: auto; height: 22px; }
.hscroll { height: 24px; background: #cfcfcf; display: flex; }
.hscroll .btn { width: 22px; }
.hscroll .thumb { width: 1076px; background: #e8e8e8; }
.hscroll .end { margin-left: auto; }
.hscroll .corner { width: 24px; }
.side { flex: 1; display: flex; justify-content: space-between; padding: 11px 0 0 7px; }
.side span { writing-mode: vertical-rl; font-size: 15px; line-height: 19px; }
.side i { width: 9px; height: 36px; background: #c9c9c9; }

/* dialog window */
.dialog { position: absolute; left: 446px; top: 178px; width: 1187px; height: 658px; background: #eee; border: 2px solid #2a5fae; box-shadow: 0 1px 7px rgba(25,60,120,.75); display: flex; flex-direction: column; }
.dialog > header { height: 31px; margin: -1px -1px 0; flex: none; background: #204388; color: #e6edfb; display: flex; align-items: center; }
.dialog > header svg { margin: -3px 0 0 5px; }
.dialog > header span { margin: 6px 0 0 11px; letter-spacing: .13px; }
.dialog > header .x { margin: 4px 16px 0 auto; }
.body { display: flex; height: 570px; flex: none; border-bottom: 1px solid #bbb; margin-right: 3px; }
.dtree { width: 216px; height: 562px; margin: 3px 0 0 4px; border: 1px solid #bbb; border-width: 2px 1px 1px 2px; background: #fdfdfd; padding: 0 0 0 14px; }
.dtree li { height: 23.4px; line-height: 22.4px; padding-left: 16px; position: relative; white-space: nowrap; }
.dtree li::before { content: ""; position: absolute; left: 0; top: 11px; width: 13px; border-top: 1px dotted #777; }
.dtree li:not(:last-child)::after { content: ""; position: absolute; left: 0; top: 11px; height: 24px; border-left: 1px dotted #777; }
.dtree b { background: #eee; padding: 1px 3px; margin-left: -3px; letter-spacing: .2px; }
.main { width: 950px; padding-left: 16px; }
.top { display: flex; height: 375px; }
.form { width: 714px; padding-top: 21px; display: grid; grid-template-columns: 148px 566px; grid-template-rows: 40px 42px 28px 54px 22px 58px 24px 58px 18px; }
.form label { grid-column: 1; align-self: center; white-space: nowrap; letter-spacing: .05px; }
.form .wide { letter-spacing: .25px; }
.field { grid-column: 2; display: flex; justify-content: space-between; align-items: center; height: 30px; align-self: center; white-space: nowrap; }
.field.f1 { margin-top: 5px; }
.field.f3 { height: 31px; margin-top: 5px; }
.ro, .path { width: 527px; height: 30px; border: 2px solid #ccc; padding-left: 5px; }
.ro { background: #dadada; box-shadow: inset 0 0 0 1px #fafafa; line-height: 27px; padding-left: 6px; }
.path { background: #fdfdfd; line-height: 21px; }
.sq { width: 34px; height: 30px; border: 2px solid #a5a5a5; background: #fcfcfc; text-align: center; line-height: 30px; font-size: 14px; color: #777; }
.combo { display: flex; justify-content: space-between; width: 565px; height: 31px; border: 2px solid #ccc; background: #fff; color: #111; line-height: 26px; padding-left: 4px; }
.combo i { width: 24px; background: #b9b9b9; }
.actions { width: 176px; margin-left: 36px; padding-top: 67px; display: flex; flex-direction: column; gap: 6px; }
button { height: 34px; flex: none; border: 2px solid #a0a0a0; background: #fcfcfc; font: inherit; color: #3c3c3c; padding: 0; }
.actions button:first-child { padding-left: 5px; }
.actions button { letter-spacing: .15px; }
.actions .gap { margin-top: 39px; }
.actions .off { color: #a2a2a2; margin-top: 1px; }
.actions .last { margin-top: -2px; }
u { text-underline-offset: 2px; }
.check { display: flex; align-items: center; gap: 5px; white-space: nowrap; }
.check i { width: 17px; height: 17px; border: 2px solid #a5a5a5; background: #fdfdfd; flex: none; }
.wash { margin: 4px 0 0 -21px; letter-spacing: .3px; }
.rep { width: 790px; text-align: right; padding-top: 36px; height: 60px; }
.gloss { display: flex; height: 30px; padding-left: 149px; }
.gloss .check { width: 317px; height: 24px; }
.gloss .dim { width: 214px; line-height: 27px; color: #aaa; letter-spacing: -.1px; }
.combo2 { width: 131px; height: 31px; border: 2px solid #aaa; background: #f6f6f6; display: flex; justify-content: flex-end; padding: 1px; margin-left: -1px; }
.combo2 i { width: 23px; background: #ddd; display: grid; place-items: center; }
.combo2 i::after { content: ""; border: 4px solid transparent; border-top-color: #999; margin-top: 4px; }
.plabel { padding: 15px 0 0 7px; height: 42px; }
.bars { display: flex; gap: 27px; padding-left: 7px; }
.bars span { width: 634px; height: 24px; border: 2px solid #777; border-right-color: #eee; border-bottom-color: #eee; }
.bars span + span { width: 255px; height: 23px; border: 2px solid #c0c0c0; margin-top: 1px; }
.dialog footer { display: flex; justify-content: flex-end; gap: 7px; padding: 8px 10px 0 0; }
.dialog footer button { width: 110px; height: 37px; }
.droplist { position: absolute; left: 384px; top: 166px; width: 566px; height: 307px; border: 2px solid #1a1a1a; border-right-width: 3px; background: #fff; color: #111; display: flex; box-shadow: 2px 5px 6px rgba(0,0,0,.4), -2px 3px 5px rgba(0,0,0,.2); }
.droplist ul { flex: 1; padding-top: 1px; }
.droplist li { height: 19.03px; line-height: 19px; padding-left: 17px; white-space: nowrap; letter-spacing: .07px; }
.droplist .h { padding-left: 2px; letter-spacing: .15px; }
.h span { border-bottom: 1px solid #111; }
.bar { width: 23px; background: #e3e1df; display: flex; flex-direction: column; }
.bar span { height: 22px; background: #c9c6c2; border: 1px solid #f5f5f5; border-right-color: #555; border-bottom: 2px solid #555; display: grid; place-items: center; }
.bar .t { flex: 1; margin-top: 18px; }
.cursor { position: absolute; left: 933px; top: 144px; }

/* player overlay */
.shade { position: absolute; left: 0; top: 0; width: 1870px; height: 1054px; background: linear-gradient(transparent 560px, rgba(0,0,0,.03) 640px, rgba(0,0,0,.08) 700px, rgba(0,0,0,.16) 770px, rgba(0,0,0,.22) 840px, rgba(0,0,0,.31) 924px, rgba(0,0,0,.36) 960px, rgba(0,0,0,.42) 978px, rgba(0,0,0,.56) 1005px, rgba(0,0,0,.67) 1030px, rgba(0,0,0,.74) 1054px); }
.callout { position: absolute; left: 810px; top: 342px; width: 609px; height: 307px; border: 2px solid #fe0000; }
.toggle { position: absolute; left: 1760px; top: 983px; }
.cc { position: absolute; left: 1875px; top: 988px; width: 17px; overflow: hidden; }
.caption { position: absolute; left: 436px; top: 735px; width: 992px; height: 54px; background: rgba(8,8,8,.8); color: #fff; font: 46px/55px Roboto, sans-serif; letter-spacing: .35px; text-align: center; white-space: nowrap; }
.note { position: absolute; left: 903px; top: 857px; font: 500 36.4px/48px "Noto Sans CJK SC", sans-serif; color: #fe0000; white-space: nowrap; }
.progress { position: absolute; left: 0; right: 0; top: 952px; height: 6px; background: #fe0000; }
```
